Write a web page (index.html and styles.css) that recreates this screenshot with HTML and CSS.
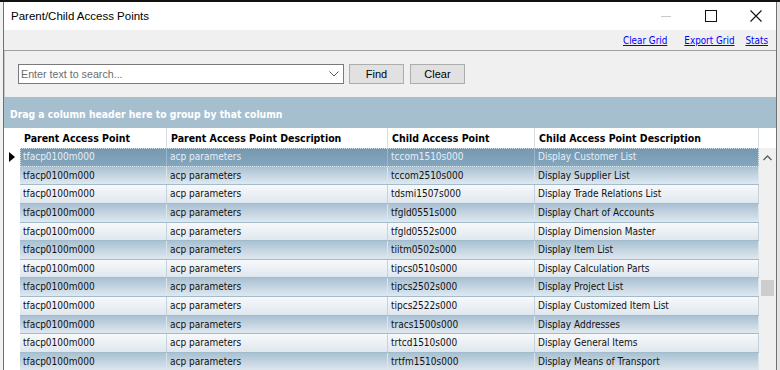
FILE: index.html
```html
<!DOCTYPE html>
<html lang="en">
<head>
    <meta charset="UTF-8" />
    <title>Parent/Child Access Points</title>
    <link rel="stylesheet" href="styles.css">
</head>
<body>
    <div class="desktop">
        <div class="edge"></div>
        <div class="window">
            <div class="titlebar">
                <span class="title">Parent/Child Access Points</span>
                <div class="controls">
                    <span class="ctl minimize"><svg width="12" height="12" viewBox="0 0 12 12"><path d="M1 6.5h10" stroke="#c8c8c8" stroke-width="1"/></svg></span>
                    <span class="ctl"><svg width="12" height="12" viewBox="0 0 12 12"><rect x="0.5" y="0.5" width="11" height="11" fill="none" stroke="#111" stroke-width="1"/></svg></span>
                    <span class="ctl"><svg width="12" height="12" viewBox="0 0 12 12"><path d="M0.5 0.5l11 11M11.5 0.5l-11 11" stroke="#111" stroke-width="1.1"/></svg></span>
                </div>
            </div>

            <div class="toolbar">
                <a href="#" class="clear-grid">Clear Grid</a>
                <a href="#" class="export-grid">Export Grid</a>
                <a href="#">Stats</a>
            </div>

            <div class="search">
                <div class="combo">
                    <span class="placeholder">Enter text to search...</span>
                    <svg width="10" height="6" viewBox="0 0 10 6"><path d="M0.5 0.5l4.5 4.5 4.5-4.5" fill="none" stroke="#555" stroke-width="1"/></svg>
                </div>
                <button class="btn">Find</button>
                <button class="btn">Clear</button>
            </div>

            <div class="group-panel">Drag a column header here to group by that column</div>

            <div class="grid">
                <div class="grid-head">
                    <div class="ind"></div>
                    <div class="hcell c1">Parent Access Point</div>
                    <div class="hcell c2">Parent Access Point Description</div>
                    <div class="hcell c3">Child Access Point</div>
                    <div class="hcell c4">Child Access Point Description</div>
                    <div class="hcell sb"></div>
                </div>
                <div class="grid-body">
                    <div class="rows">
                        <div class="row selected">
                            <div class="ind"><svg width="6" height="10" viewBox="0 0 6 10"><path d="M0 0l6 5-6 5z" fill="#000"/></svg></div>
                            <div class="cells"><div class="cell c1">tfacp0100m000</div><div class="cell c2">acp parameters</div><div class="cell c3">tccom1510s000</div><div class="cell c4">Display Customer List</div></div>
                        </div>
                        <div class="row alt">
                            <div class="ind"></div>
                            <div class="cells"><div class="cell c1">tfacp0100m000</div><div class="cell c2">acp parameters</div><div class="cell c3">tccom2510s000</div><div class="cell c4">Display Supplier List</div></div>
                        </div>
                        <div class="row">
                            <div class="ind"></div>
                            <div class="cells"><div class="cell c1">tfacp0100m000</div><div class="cell c2">acp parameters</div><div class="cell c3">tdsmi1507s000</div><div class="cell c4">Display Trade Relations List</div></div>
                        </div>
                        <div class="row alt">
                            <div class="ind"></div>
                            <div class="cells"><div class="cell c1">tfacp0100m000</div><div class="cell c2">acp parameters</div><div class="cell c3">tfgld0551s000</div><div class="cell c4">Display Chart of Accounts</div></div>
                        </div>
                        <div class="row">
                            <div class="ind"></div>
                            <div class="cells"><div class="cell c1">tfacp0100m000</div><div class="cell c2">acp parameters</div><div class="cell c3">tfgld0552s000</div><div class="cell c4">Display Dimension Master</div></div>
                        </div>
                        <div class="row alt">
                            <div class="ind"></div>
                            <div class="cells"><div class="cell c1">tfacp0100m000</div><div class="cell c2">acp parameters</div><div class="cell c3">tiitm0502s000</div><div class="cell c4">Display Item List</div></div>
                        </div>
                        <div class="row">
                            <div class="ind"></div>
                            <div class="cells"><div class="cell c1">tfacp0100m000</div><div class="cell c2">acp parameters</div><div class="cell c3">tipcs0510s000</div><div class="cell c4">Display Calculation Parts</div></div>
                        </div>
                        <div class="row alt">
                            <div class="ind"></div>
                            <div class="cells"><div class="cell c1">tfacp0100m000</div><div class="cell c2">acp parameters</div><div class="cell c3">tipcs2502s000</div><div class="cell c4">Display Project List</div></div>
                        </div>
                        <div class="row">
                            <div class="ind"></div>
                            <div class="cells"><div class="cell c1">tfacp0100m000</div><div class="cell c2">acp parameters</div><div class="cell c3">tipcs2522s000</div><div class="cell c4">Display Customized Item List</div></div>
                        </div>
                        <div class="row alt">
                            <div class="ind"></div>
                            <div class="cells"><div class="cell c1">tfacp0100m000</div><div class="cell c2">acp parameters</div><div class="cell c3">tracs1500s000</div><div class="cell c4">Display Addresses</div></div>
                        </div>
                        <div class="row">
                            <div class="ind"></div>
                            <div class="cells"><div class="cell c1">tfacp0100m000</div><div class="cell c2">acp parameters</div><div class="cell c3">trtcd1510s000</div><div class="cell c4">Display General Items</div></div>
                        </div>
                        <div class="row alt">
                            <div class="ind"></div>
                            <div class="cells"><div class="cell c1">tfacp0100m000</div><div class="cell c2">acp parameters</div><div class="cell c3">trtfm1510s000</div><div class="cell c4">Display Means of Transport</div></div>
                        </div>
                    </div>
                    <div class="vscroll">
                        <svg class="arrow" width="9" height="6" viewBox="0 0 9 6"><path d="M0.5 5l4-4 4 4" fill="none" stroke="#606060" stroke-width="1.4"/></svg>
                        <div class="thumb"></div>
                    </div>
                </div>
            </div>
        </div>
        <div class="edge right"></div>
    </div>
</body>
</html>
```

FILE: styles.css
```css
html,
body {
    margin: 0;
    padding: 0;
    width: 780px;
    height: 370px;
    overflow: hidden;
    background: #e9e9e9;
}
.desktop {
    display: flex;
    height: 370px;
    border-top: 2px solid #111;
    box-sizing: border-box;
}
.edge {
    width: 3px;
    background: #f2f2f2;
}
.edge.right {
    background: #e4e4e4;
}
.window {
    width: 772px;
    border-left: 1px solid #707070;
    border-right: 1px solid #707070;
    background: #f0f0f0;
    display: flex;
    flex-direction: column;
    overflow: hidden;
}
.window > div {
    flex: none;
}

/* title bar */
.titlebar {
    height: 28px;
    background: #fff;
    display: flex;
    align-items: center;
    justify-content: space-between;
}
.title {
    padding-left: 7px;
    font-family: 'Liberation Sans', Arial, sans-serif;
    font-size: 11.5px;
    color: #000;
}
.controls {
    display: flex;
    align-items: center;
    margin-right: -2px;
}
.ctl {
    width: 45px;
    height: 28px;
    display: flex;
    align-items: center;
    justify-content: center;
}

/* links */
.toolbar {
    height: 20px;
    display: flex;
    justify-content: flex-end;
    align-items: center;
    padding-right: 8px;
    border-bottom: 1px solid #a0a0a0;
    font-family: 'DejaVu Sans', sans-serif;
    font-stretch: condensed;
    font-size: 9.8px;
}
.toolbar a {
    color: #0000ff;
    text-decoration: underline;
}
.clear-grid { margin-right: 17px; }
.export-grid { margin-right: 11px; }

/* search */
.search {
    height: 46px;
    display: flex;
    align-items: flex-start;
    gap: 5px;
    padding: 13px 0 0 13px;
    box-sizing: border-box;
    border-left: 1px solid #c8c8c8;
}
.combo {
    width: 326px;
    height: 20px;
    box-sizing: border-box;
    background: #fff;
    border: 1px solid #7a7a7a;
    display: flex;
    align-items: center;
    justify-content: space-between;
    padding: 0 4px 0 2px;
}
.placeholder {
    font-family: 'Liberation Sans', Arial, sans-serif;
    font-size: 10.7px;
    color: #6d6d6d;
}
.btn {
    width: 55px;
    height: 20px;
    padding: 0;
    background: #e1e1e1;
    border: 1px solid #adadad;
    font-family: 'Liberation Sans', Arial, sans-serif;
    font-size: 11px;
    color: #000;
}
.btn + .btn {
    margin-left: 1px;
}

/* group by panel */
.group-panel {
    height: 31px;
    box-sizing: border-box;
    padding: 11px 0 0 6px;
    background: #a6bfcf;
    color: #fff;
    font-family: 'DejaVu Sans', sans-serif;
    font-stretch: condensed;
    font-weight: bold;
    font-size: 10.3px;
}

/* grid */
.grid {
    font-family: 'DejaVu Sans', sans-serif;
    font-stretch: condensed;
    font-size: 10px;
    color: #111;
}
.grid-head {
    display: flex;
    height: 20px;
    background: #fff;
}
.ind {
    width: 16px;
    flex: none;
    background: #fff;
    display: flex;
    align-items: center;
    justify-content: center;
}
.c1 { width: 147px; }
.c2 { width: 221px; }
.c3 { width: 147px; }
.c4 { width: 224px; }
.sb { width: 17px; }
.hcell {
    box-sizing: border-box;
    padding: 4px 0 0 4px;
    font-weight: bold;
    color: #000;
    border-right: 1px solid #d6dee4;
    font-size: 10.5px;
}
.hcell.sb {
    border-right: none;
}
.grid-body {
    display: flex;
}
.rows {
    width: 755px;
}
.row {
    display: flex;
    height: 18.64px;
}
.cells {
    display: flex;
    flex: 1;
    background: linear-gradient(#f7f9fb, #dfe7ee);
    border-bottom: 1px solid #a3bccb;
    box-sizing: border-box;
}
.row.alt .cells {
    background: linear-gradient(#a9c1d2, #dfe8f0);
}
.row.selected .cells {
    background: linear-gradient(#7598b1, #84a7be);
    color: #e8eff4;
    outline: 1px dotted #d8e4ec;
    outline-offset: -1px;
}
.cell {
    box-sizing: border-box;
    padding: 3px 0 0 3px;
    border-right: 1px solid #c3d2dc;
    white-space: nowrap;
    overflow: hidden;
}
.row.alt .cell {
    border-right-color: #dbe5ec;
}
.row.selected .cell {
    border-right-color: #9ab6c8;
}
.vscroll {
    width: 17px;
    height: 224px;
    background: #f0f0f0;
    position: relative;
}
.vscroll .arrow {
    position: absolute;
    left: 4px;
    top: 7px;
}
.thumb {
    position: absolute;
    left: 2px;
    top: 132px;
    width: 13px;
    height: 16px;
    background: #cdcdcd;
}
```
